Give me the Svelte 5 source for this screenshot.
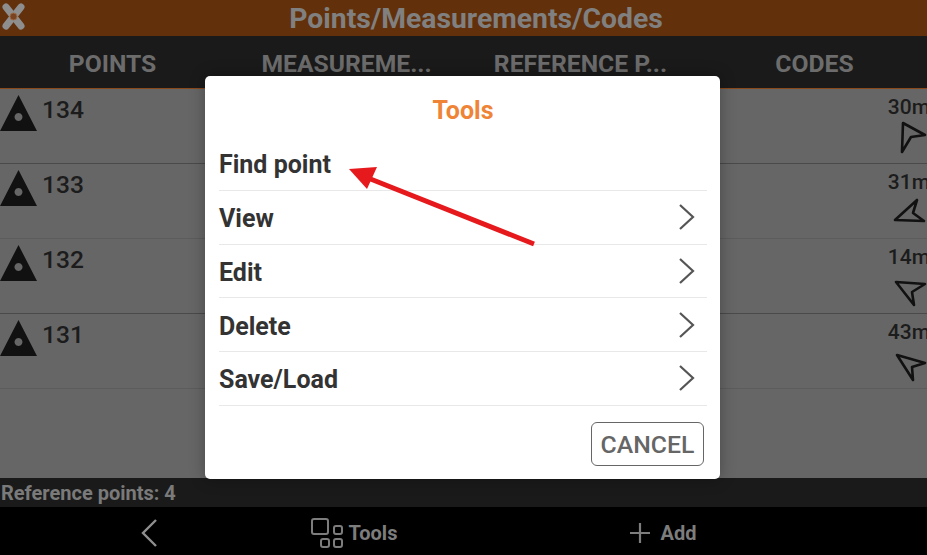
<script>
	// arrow outlines, taken per row because each one points somewhere else
	const rows = [
		{ id: 134, dist: '30m', arrow: '10,6 32,18 18,20 9,35' },
		{ id: 133, dist: '31m', arrow: '24,8 20,21 31,29 2,28' },
		{ id: 132, dist: '14m', arrow: '3,15 32,17 19,25 21,38' },
		{ id: 131, dist: '43m', arrow: '4,13 32,21 19,25 20,38' }
	];
	const tabs = ['POINTS', 'MEASUREME...', 'REFERENCE P...', 'CODES'];
	const tools = [
		{ label: 'Find point', more: false },
		{ label: 'View', more: true },
		{ label: 'Edit', more: true },
		{ label: 'Delete', more: true },
		{ label: 'Save/Load', more: true }
	];
</script>

<div class="screen">
	<header class="titlebar">
		<svg class="logo" viewBox="0 0 25 36" width="25" height="36">
			<path d="M6 7 L21 26" stroke="#8e8e8e" stroke-width="7" stroke-linecap="round" />
			<path d="M21 7 L6 26" stroke="#8e8e8e" stroke-width="7" stroke-linecap="round" />
			<circle cx="13.5" cy="16.5" r="3.5" fill="#7a4420" stroke="#9a6a48" stroke-width="1" />
		</svg>
		<span class="title">Points/Measurements/Codes</span>
	</header>

	<nav class="tabs">
		{#each tabs as tab}
			<div class="tab">{tab}</div>
		{/each}
	</nav>

	<main class="list">
		{#each rows as row}
			<div class="row">
				<div class="left">
					<svg viewBox="0 0 38 36" width="38" height="36">
						<path fill-rule="evenodd" d="M18.5 0 L37 36 L0 36 Z M18.5 18 a4 4 0 1 0 0.01 0 Z" fill="#111" />
					</svg>
					<span class="num">{row.id}</span>
				</div>
				<div class="right">
					<span class="dist">{row.dist}</span>
					<svg class="nav" viewBox="0 0 34 42" width="34" height="42">
						<polygon points={row.arrow} fill="none" stroke="#111" stroke-width="2.6" stroke-linejoin="round" />
					</svg>
				</div>
			</div>
		{/each}
	</main>

	<div class="status">Reference points: 4</div>

	<footer class="bottombar">
		<div class="action back">
			<svg viewBox="0 0 20 32" width="20" height="32">
				<path d="M17 3 L4 16 L17 29" fill="none" stroke="#8f8f8f" stroke-width="2.4" />
			</svg>
		</div>
		<div class="action tools">
			<svg viewBox="0 0 32 30" width="32" height="30">
				<rect x="1" y="1" width="16" height="15" rx="2" fill="none" stroke="#7d7d7d" stroke-width="2" />
				<rect x="23" y="8" width="8" height="8" rx="2" fill="none" stroke="#7d7d7d" stroke-width="2" />
				<rect x="10" y="21" width="8" height="8" rx="2" fill="none" stroke="#7d7d7d" stroke-width="2" />
				<rect x="23" y="21" width="8" height="8" rx="2" fill="none" stroke="#7d7d7d" stroke-width="2" />
			</svg>
			<span>Tools</span>
		</div>
		<div class="action add">
			<svg viewBox="0 0 20 20" width="20" height="20">
				<path d="M10 0 V20 M0 10 H20" stroke="#7d7d7d" stroke-width="2.2" />
			</svg>
			<span>Add</span>
		</div>
	</footer>

	<div class="dialog">
		<h2>Tools</h2>
		<ul>
			{#each tools as tool}
				<li>
					<span>{tool.label}</span>
					{#if tool.more}
						<svg viewBox="0 0 18 28" width="18" height="28">
							<path d="M2 2 L15 14 L2 26" fill="none" stroke="#555" stroke-width="2.2" />
						</svg>
					{/if}
				</li>
			{/each}
		</ul>
		<div class="actions">
			<button>CANCEL</button>
		</div>
	</div>

	<svg class="pointer" viewBox="0 0 927 555" width="927" height="555">
		<path d="M534 244 L368 178" stroke="#e61a1d" stroke-width="5" />
		<path d="M349 169 L377 167 L367 189 Z" fill="#e61a1d" />
	</svg>
</div>

<style>
	:global(body) {
		margin: 0;
		font-family: Roboto, "Liberation Sans", sans-serif;
	}

	.screen {
		position: relative;
		width: 927px;
		height: 555px;
		overflow: hidden;
		display: flex;
		flex-direction: column;
		background: #666;
	}

	.titlebar {
		height: 36px;
		flex: none;
		background: #63300c;
		display: flex;
		align-items: center;
	}

	.logo {
		flex: none;
	}

	.title {
		flex: 1;
		text-align: center;
		color: #808080;
		font-size: 28.3px;
		font-weight: 700;
	}

	.tabs {
		height: 52px;
		flex: none;
		background: #1a1a1a;
		border-bottom: 1px solid #8a4a1c;
		display: grid;
		grid-template-columns: repeat(4, 234px);
		justify-content: center;
	}

	.tab {
		color: #6c6c6c;
		font-size: 24.7px;
		font-weight: 700;
		padding-top: 3px;
		display: flex;
		align-items: center;
		justify-content: center;
	}

	.list {
		flex: 1;
		background: #666;
		overflow: hidden;
	}

	.row {
		height: 74px;
		border-bottom: 1px solid #4a4a4a;
		display: flex;
		justify-content: space-between;
	}

	.row:nth-child(even) {
		border-bottom-color: #5c5c5c;
	}

	.left {
		display: flex;
		gap: 4px;
		align-items: flex-start;
		padding-top: 6px;
	}

	.num,
	.dist {
		color: #1c1c1c;
		font-weight: 500;
	}

	.num {
		font-size: 24.6px;
		line-height: 30px;
	}

	.right {
		display: flex;
		flex-direction: column;
		align-items: flex-end;
		padding-top: 6px;
	}

	.dist {
		font-size: 21px;
		line-height: 24px;
		margin-right: -3px;
	}

	.nav {
		margin-top: -2px;
	}

	.status {
		height: 29px;
		flex: none;
		background: #1a1a1a;
		color: #7a7a7a;
		font-size: 20px;
		font-weight: 700;
		line-height: 30px;
		padding-left: 1px;
	}

	.bottombar {
		height: 48px;
		box-sizing: border-box;
		padding-top: 3px;
		flex: none;
		background: #000;
		display: flex;
		align-items: center;
	}

	.action {
		display: flex;
		align-items: center;
		justify-content: center;
		gap: 6px;
		color: #7d7d7d;
		font-size: 20px;
		font-weight: 700;
	}

	.back {
		width: 297px;
	}

	.tools {
		width: 108px;
		margin-left: 3px;
	}

	.add {
		width: 110px;
		margin-left: 200px;
		gap: 11px;
	}

	.dialog {
		position: absolute;
		left: 205px;
		top: 76px;
		width: 515px;
		height: 403px;
		box-sizing: border-box;
		background: #fff;
		border-radius: 5px;
		padding: 0 13px 0 14px;
		box-shadow: 0 0 16px rgba(0, 0, 0, 0.3);
		display: flex;
		flex-direction: column;
	}

	h2 {
		margin: 0;
		height: 61px;
		font-size: 25px;
		font-weight: 700;
		line-height: 70px;
		text-align: center;
		color: #ef8436;
	}

	ul {
		list-style: none;
		margin: 0;
		padding: 0;
	}

	li {
		height: 52.75px;
		border-bottom: 1px solid #e8e8e8;
		display: flex;
		align-items: center;
		justify-content: space-between;
		font-size: 25px;
		font-weight: 700;
		color: #333;
	}

	li span {
		padding-top: 3px;
	}

	li svg {
		margin-right: 11px;
	}

	.actions {
		display: flex;
		justify-content: flex-end;
		padding: 16px 3px 0 0;
	}

	button {
		width: 113px;
		height: 44px;
		background: #fff;
		border: 1px solid #666;
		border-radius: 6px;
		color: #666;
		font-family: inherit;
		font-size: 24.8px;
		font-weight: 500;
		padding: 2px 0 0;
	}

	.pointer {
		position: absolute;
		left: 0;
		top: 0;
		pointer-events: none;
	}
</style>
